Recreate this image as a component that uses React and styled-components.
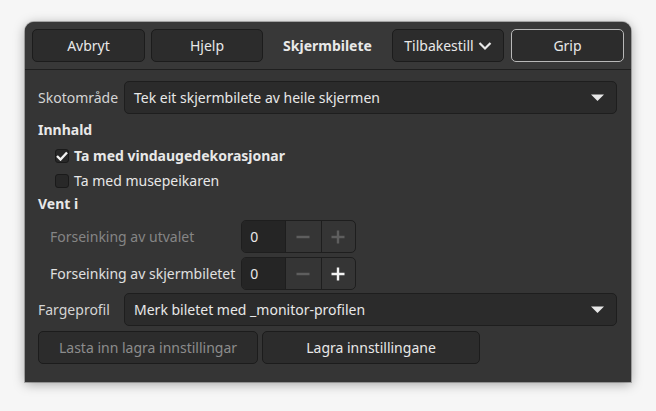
import styled, { createGlobalStyle } from "styled-components";

const GlobalStyle = createGlobalStyle`
  html, body {
    margin: 0;
    padding: 0;
    background: #f6f6f6;
  }
  body {
    font-family: "Noto Sans", "DejaVu Sans", sans-serif;
    font-size: 14px;
    color: #e8e8e8;
  }
`;

const Page = styled.div`
  width: 656px;
  height: 411px;
  padding: 22px 0 0 25px;
  box-sizing: border-box;
`;

const Window = styled.div`
  width: 606px;
  height: 360px;
  background: #353535;
  border-radius: 9px 9px 0 0;
  box-shadow: 0 2px 12px rgba(0, 0, 0, 0.35), 0 0 0 1px rgba(0, 0, 0, 0.25);
  display: flex;
  flex-direction: column;
  overflow: hidden;
`;

const HeaderBar = styled.div`
  height: 48px;
  padding: 7px 7px 0 7px;
  box-sizing: border-box;
  display: flex;
  align-items: flex-start;
  border-bottom: 1px solid #1f1f1f;
  background: #383838;
`;

const Button = styled.button`
  font-family: inherit;
  font-size: 14px;
  color: ${(p) => (p.$dim ? "#8c8c8c" : "#e8e8e8")};
  width: ${(p) => p.$w}px;
  height: 33px;
  margin-right: ${(p) => p.$mr || 0}px;
  background: #2c2c2c;
  border: 1px solid ${(p) => (p.$default ? "#b8b8b8" : "#1c1c1c")};
  border-radius: 5px;
  display: flex;
  align-items: center;
  justify-content: center;
  gap: 4px;
  padding: 0;
  box-sizing: border-box;
`;

const Title = styled.div`
  flex: 1;
  text-align: center;
  font-weight: bold;
  line-height: 33px;
`;

const Body = styled.div`
  padding: 11px 14px 0 13px;
  display: flex;
  flex-direction: column;
`;

const ComboRow = styled.div`
  display: flex;
  align-items: center;
`;

const FieldLabel = styled.div`
  width: 86px;
  flex-shrink: 0;
  color: #d4d4d4;
`;

const Combo = styled.div`
  flex: 1;
  height: 33px;
  box-sizing: border-box;
  background: #2b2b2b;
  border: 1px solid #1e1e1e;
  border-radius: 5px;
  display: flex;
  align-items: center;
  justify-content: space-between;
  padding: 0 12px 0 9px;
`;

const Section = styled.div`
  font-weight: bold;
  line-height: 20px;
  margin-top: ${(p) => p.$mt || 0}px;
  margin-bottom: ${(p) => p.$mb || 0}px;
`;

const CheckRow = styled.label`
  display: flex;
  align-items: center;
  height: 25px;
  padding-left: 17px;
  gap: 5px;
  font-weight: ${(p) => (p.$bold ? "bold" : "normal")};
`;

const Box = styled.span`
  width: 14px;
  height: 14px;
  box-sizing: border-box;
  background: #282828;
  border: 1px solid #1a1a1a;
  border-radius: 3px;
  display: flex;
  align-items: center;
  justify-content: center;
`;

const SpinGrid = styled.div`
  display: grid;
  grid-template-columns: auto auto;
  justify-content: start;
  align-items: center;
  column-gap: 6px;
  row-gap: 4px;
  padding-left: 12px;
  margin-top: 6px;
  margin-bottom: 3px;
`;

const SpinLabel = styled.div`
  color: ${(p) => (p.$dim ? "#858585" : "#e0e0e0")};
`;

const Spin = styled.div`
  display: flex;
  height: 33px;
  width: 115px;
  box-sizing: border-box;
  border: 1px solid #1e1e1e;
  border-radius: 5px;
  overflow: hidden;
  background: #353535;
`;

const SpinEntry = styled.div`
  width: 44px;
  background: #252525;
  display: flex;
  align-items: center;
  padding-left: 8px;
  box-sizing: border-box;
  border-right: 1px solid #1e1e1e;
`;

const SpinBtn = styled.div`
  width: ${(p) => p.$w}px;
  display: flex;
  align-items: center;
  justify-content: center;
  border-left: ${(p) => (p.$sep ? "1px solid #1e1e1e" : "none")};
`;

const ButtonRow = styled.div`
  display: flex;
  gap: 4px;
  margin-top: 5px;
`;

const Arrow = () => (
  <svg width="13" height="7" viewBox="0 0 13 7">
    <path d="M0 0.5 H13 L6.5 7 Z" fill="#e8e8e8" />
  </svg>
);

const Chevron = () => (
  <svg width="14" height="10" viewBox="0 0 14 10">
    <path d="M1.5 2 L7 7.5 L12.5 2" stroke="#e8e8e8" strokeWidth="2.2" fill="none" />
  </svg>
);

const Check = () => (
  <svg width="12" height="10" viewBox="0 0 12 10">
    <path d="M1 5 L4.5 8.5 L11 1.5" stroke="#f2f2f2" strokeWidth="2.4" fill="none" />
  </svg>
);

const Minus = ({ color }) => (
  <svg width="14" height="14" viewBox="0 0 14 14">
    <path d="M0.5 7 H13.5" stroke={color} strokeWidth="2.4" />
  </svg>
);

const Plus = ({ color }) => (
  <svg width="14" height="14" viewBox="0 0 14 14">
    <path d="M0.5 7 H13.5 M7 0.5 V13.5" stroke={color} strokeWidth="2.4" />
  </svg>
);

function SpinBox({ plusActive }) {
  return (
    <Spin>
      <SpinEntry>0</SpinEntry>
      <SpinBtn $w={35}>
        <Minus color="#5e5e5e" />
      </SpinBtn>
      <SpinBtn $w={34} $sep>
        <Plus color={plusActive ? "#f2f2f2" : "#5e5e5e"} />
      </SpinBtn>
    </Spin>
  );
}

export default function App() {
  return (
    <>
      <GlobalStyle />
      <Page>
        <Window>
          <HeaderBar>
            <Button $w={113} $mr={6}>Avbryt</Button>
            <Button $w={112}>Hjelp</Button>
            <Title>Skjermbilete</Title>
            <Button $w={112} $mr={7}>
              Tilbakestill <Chevron />
            </Button>
            <Button $w={113} $default>Grip</Button>
          </HeaderBar>
          <Body>
            <ComboRow>
              <FieldLabel>Skotområde</FieldLabel>
              <Combo>
                Tek eit skjermbilete av heile skjermen
                <Arrow />
              </Combo>
            </ComboRow>
            <Section $mt={6} $mb={3}>Innhald</Section>
            <CheckRow $bold>
              <Box>
                <Check />
              </Box>
              Ta med vindaugedekorasjonar
            </CheckRow>
            <CheckRow>
              <Box />
              Ta med musepeikaren
            </CheckRow>
            <Section $mt={1}>Vent i</Section>
            <SpinGrid>
              <SpinLabel $dim>Forseinking av utvalet</SpinLabel>
              <SpinBox />
              <SpinLabel>Forseinking av skjermbiletet</SpinLabel>
              <SpinBox plusActive />
            </SpinGrid>
            <ComboRow>
              <FieldLabel>Fargeprofil</FieldLabel>
              <Combo>
                Merk biletet med _monitor-profilen
                <Arrow />
              </Combo>
            </ComboRow>
            <ButtonRow>
              <Button $w={220} $dim>Lasta inn lagra innstillingar</Button>
              <Button $w={218}>Lagra innstillingane</Button>
            </ButtonRow>
          </Body>
        </Window>
      </Page>
    </>
  );
}
